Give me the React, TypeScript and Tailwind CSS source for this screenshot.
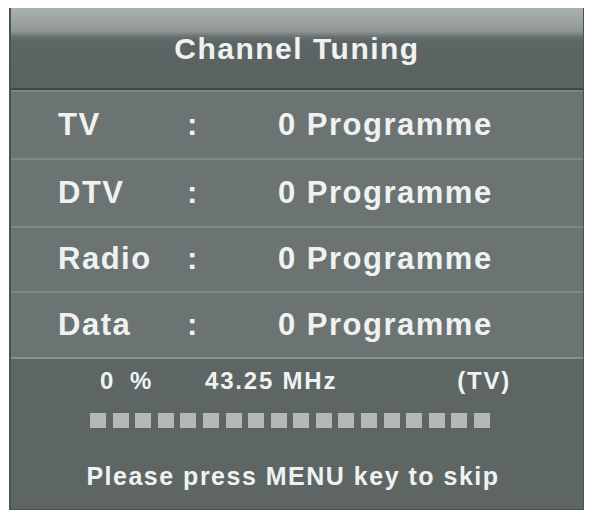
import React from 'react';

const rows = [
  { label: 'TV', value: '0 Programme', h: 'h-[68px]' },
  { label: 'DTV', value: '0 Programme', h: 'h-[68px]' },
  { label: 'Radio', value: '0 Programme', h: 'h-[65px]' },
  { label: 'Data', value: '0 Programme', h: 'h-[64px]' },
];

const App: React.FC = () => {
  return (
    <div className="w-[590px] h-[515px] bg-white pt-[8px] pl-[9px]" style={{ fontFamily: '"Liberation Sans", Arial, sans-serif' }}>
      <div className="w-[575px] h-[502px] flex flex-col border-l-2 border-[#4a5351] border-r border-r-[#4a5351] border-b border-b-[#4a5351] bg-[#5e6765] text-[#f0f2f1] font-bold">
        {/* Header with glossy top */}
        <div className="h-[80px] flex items-center justify-center bg-[linear-gradient(180deg,#aab0af_0px,#9aa09f_16px,#8b9291_24px,#667070_29px,#5c6563_34px,#5a6361_80px)]">
          <span className="text-[30px] tracking-[1.5px]">Channel Tuning</span>
        </div>
        <div className="h-[2px] bg-[#3e4745]" />
        <div className="h-[2px] bg-[#7c8583]" />

        {/* Channel counts */}
        <div className="flex flex-col bg-[#6b7472]">
          {rows.map((r, i) => (
            <div
              key={r.label}
              className={`${r.h} grid grid-cols-[129px_91px_1fr] items-center pl-[47px] text-[31px] tracking-[1.5px] ${i < rows.length - 1 ? 'border-b-2 border-[#7f8886]' : ''}`}
            >
              <span>{r.label}</span>
              <span>:</span>
              <span>{r.value}</span>
            </div>
          ))}
        </div>
        <div className="h-[2px] bg-[#8a9290]" />

        {/* Progress area */}
        <div className="flex-1 flex flex-col items-center bg-[#5d6664]">
          <div className="w-full flex items-center h-[40px] text-[24px] tracking-[1.8px] mt-[2px]">
            <span className="ml-[89px] w-[30px]">0</span>
            <span className="w-[75px]">%</span>
            <span className="flex-1">43.25 MHz</span>
            <span className="mr-[72px]">(TV)</span>
          </div>
          <div className="flex gap-[6.6px] mt-[12px] mr-[14px]">
            {Array.from({ length: 18 }).map((_, i) => (
              <div key={i} className="w-[16px] h-[15px] bg-[#b4b9b8]" />
            ))}
          </div>
          <div className="mt-[30px] mr-[8px] text-[25px] tracking-[1.5px]">Please press MENU key to skip</div>
        </div>
      </div>
    </div>
  );
};

export default App;
